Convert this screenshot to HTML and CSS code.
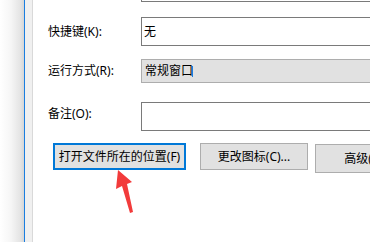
FILE: index.html
```html
<!DOCTYPE html>
<html>
<head>
<meta charset="utf-8">
<link rel="stylesheet" href="styles.css">
</head>
<body>
<div class="window">
  <div class="shadow"></div>
  <div class="edge"></div>
  <div class="strip"></div>
  <div class="content">
    <div class="row row-top">
      <div class="label"></div>
      <div class="field field-partial"></div>
    </div>
    <div class="row row-1">
      <div class="label">快捷键(K):</div>
      <div class="field">无</div>
    </div>
    <div class="row row-2">
      <div class="label">运行方式(R):</div>
      <div class="combo">常规窗口<span class="caret"></span></div>
    </div>
    <div class="row row-3">
      <div class="label">备注(O):</div>
      <div class="field"></div>
    </div>
    <div class="buttons">
      <div class="btn btn-focus">打开文件所在的位置(F)</div>
      <div class="btn btn-icon">更改图标(C)...</div>
      <div class="btn btn-adv">高级(D)...</div>
    </div>
    <svg class="arrow" width="30" height="50" viewBox="0 0 30 50">
      <polygon points="3,1 1,20 7,17 15,44 18,43 12,15 17,13" fill="#f23b3b"/>
    </svg>
  </div>
</div>
</body>
</html>
```

FILE: styles.css
```css
html, body {
  margin: 0;
  padding: 0;
  background: #ffffff;
}
body {
  width: 370px;
  height: 242px;
  overflow: hidden;
  font-family: "Noto Sans", "Noto Sans CJK SC", sans-serif;
  font-size: 12px;
  color: #000;
}
.window {
  display: flex;
  height: 242px;
}
.shadow {
  width: 24px;
  flex-shrink: 0;
  background: linear-gradient(to right, #ffffff 0%, #f6f6f6 45%, #e4e4e4 85%, #d6d6d6 100%);
}
.edge {
  width: 1px;
  flex-shrink: 0;
  background: #1a7ee0;
}
.strip {
  width: 7px;
  flex-shrink: 0;
  background: #f0f0f0;
  border-right: 1px solid #d9d9d9;
}
.content {
  flex: 1;
  position: relative;
  padding-left: 15px;
  min-width: 0;
}
.row {
  display: flex;
  align-items: center;
}
.label {
  width: 93px;
  flex-shrink: 0;
  line-height: 14px;
}
.field {
  flex: 1;
  box-sizing: border-box;
  height: 29px;
  border: 1px solid #7a7a7a;
  margin-right: -10px;
  padding: 0 0 0 2px;
  display: flex;
  align-items: center;
  line-height: 14px;
}
.field-partial {
  height: 2px;
  border-top: none;
}
.row-1 { margin-top: 15px; }
.row-2 { margin-top: 13px; }
.row-3 { margin-top: 19px; }
.row-3 .label { margin-top: -6px; }
.combo {
  flex: 1;
  box-sizing: border-box;
  height: 24px;
  background: #e1e1e1;
  border: 1px solid #adadad;
  margin-right: -10px;
  padding-left: 3px;
  display: flex;
  align-items: center;
  line-height: 14px;
}
.caret {
  display: inline-block;
  width: 1px;
  height: 11px;
  background: #1a7ee0;
  margin-left: -1px;
}
.buttons {
  display: flex;
  align-items: flex-start;
  margin-top: 12px;
  padding-left: 5px;
}
.btn {
  flex-shrink: 0;
  box-sizing: border-box;
  height: 27px;
  background: #e1e1e1;
  border: 1px solid #adadad;
  display: flex;
  align-items: center;
  justify-content: center;
  white-space: nowrap;
  line-height: 14px;
}
.btn-focus {
  width: 133px;
  border: 2px solid #0078d7;
}
.btn-icon {
  width: 108px;
  margin-left: 14px;
}
.btn-adv {
  width: 108px;
  height: 29px;
  margin-left: 7px;
  margin-top: 1px;
}
.arrow {
  position: absolute;
  left: 82px;
  top: 169px;
}
```
